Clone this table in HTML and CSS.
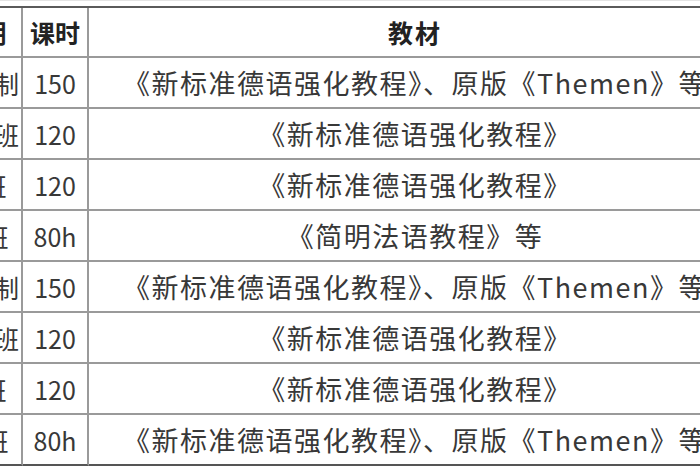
FILE: index.html
```html
<!DOCTYPE html>
<html lang="zh-CN">
<head>
<meta charset="utf-8">
<title>课程表</title>
<link rel="stylesheet" href="styles.css">
</head>
<body>
<div class="frame">
  <table class="course">
    <thead>
      <tr><th class="c-type">学期</th><th class="c-hours">课时</th><th class="c-book">教材</th></tr>
    </thead>
    <tbody>
      <tr><td class="c-type">全日制</td><td class="c-hours">150</td><td class="c-book">《新标准德语强化教程》、原版《Themen》等</td></tr>
      <tr><td class="c-type">周末班</td><td class="c-hours">120</td><td class="c-book">《新标准德语强化教程》</td></tr>
      <tr><td class="c-type">小班</td><td class="c-hours">120</td><td class="c-book">《新标准德语强化教程》</td></tr>
      <tr><td class="c-type">A1班</td><td class="c-hours">80h</td><td class="c-book">《简明法语教程》等</td></tr>
      <tr><td class="c-type">全日制</td><td class="c-hours">150</td><td class="c-book">《新标准德语强化教程》、原版《Themen》等</td></tr>
      <tr><td class="c-type">周末班</td><td class="c-hours">120</td><td class="c-book">《新标准德语强化教程》</td></tr>
      <tr><td class="c-type">小班</td><td class="c-hours">120</td><td class="c-book">《新标准德语强化教程》</td></tr>
      <tr class="last"><td class="c-type">A1班</td><td class="c-hours">80h</td><td class="c-book">《新标准德语强化教程》、原版《Themen》等</td></tr>
    </tbody>
  </table>
</div>
</body>
</html>
```

FILE: styles.css
```css
html, body {
  margin: 0;
  padding: 0;
  background: #ffffff;
}

.frame {
  width: 700px;
  height: 470px;
  overflow: hidden;
  padding-top: 5px;
  box-sizing: border-box;
  border-top: 1px solid #e4e4e4;
}

.course {
  margin-left: -58px;
  width: 801px;
  table-layout: fixed;
  border-collapse: separate;
  border-spacing: 0;
  border-top: 2px solid #5a5a5a;
  font-family: "Noto Sans CJK SC", "Noto Sans", sans-serif;
  font-size: 25px;
  color: #383838;
}

.course th,
.course td {
  box-sizing: border-box;
  padding: 0;
  text-align: center;
  vertical-align: middle;
  white-space: nowrap;
  border-right: 2px solid #9a9a9a;
  border-bottom: 2px solid #9a9a9a;
}

.course .c-type { width: 81px; }
.course .c-hours { width: 66px; }
.course .c-book {
  width: 654px;
  font-size: 27px;
  letter-spacing: 1.5px;
}

.course th {
  height: 50px;
  font-weight: bold;
  color: #222222;
}

.course th.c-book {
  font-size: 25px;
  letter-spacing: 2px;
}

.course td {
  height: 51px;
}

.course tr.last td {
  border-bottom-color: #555555;
}
```
